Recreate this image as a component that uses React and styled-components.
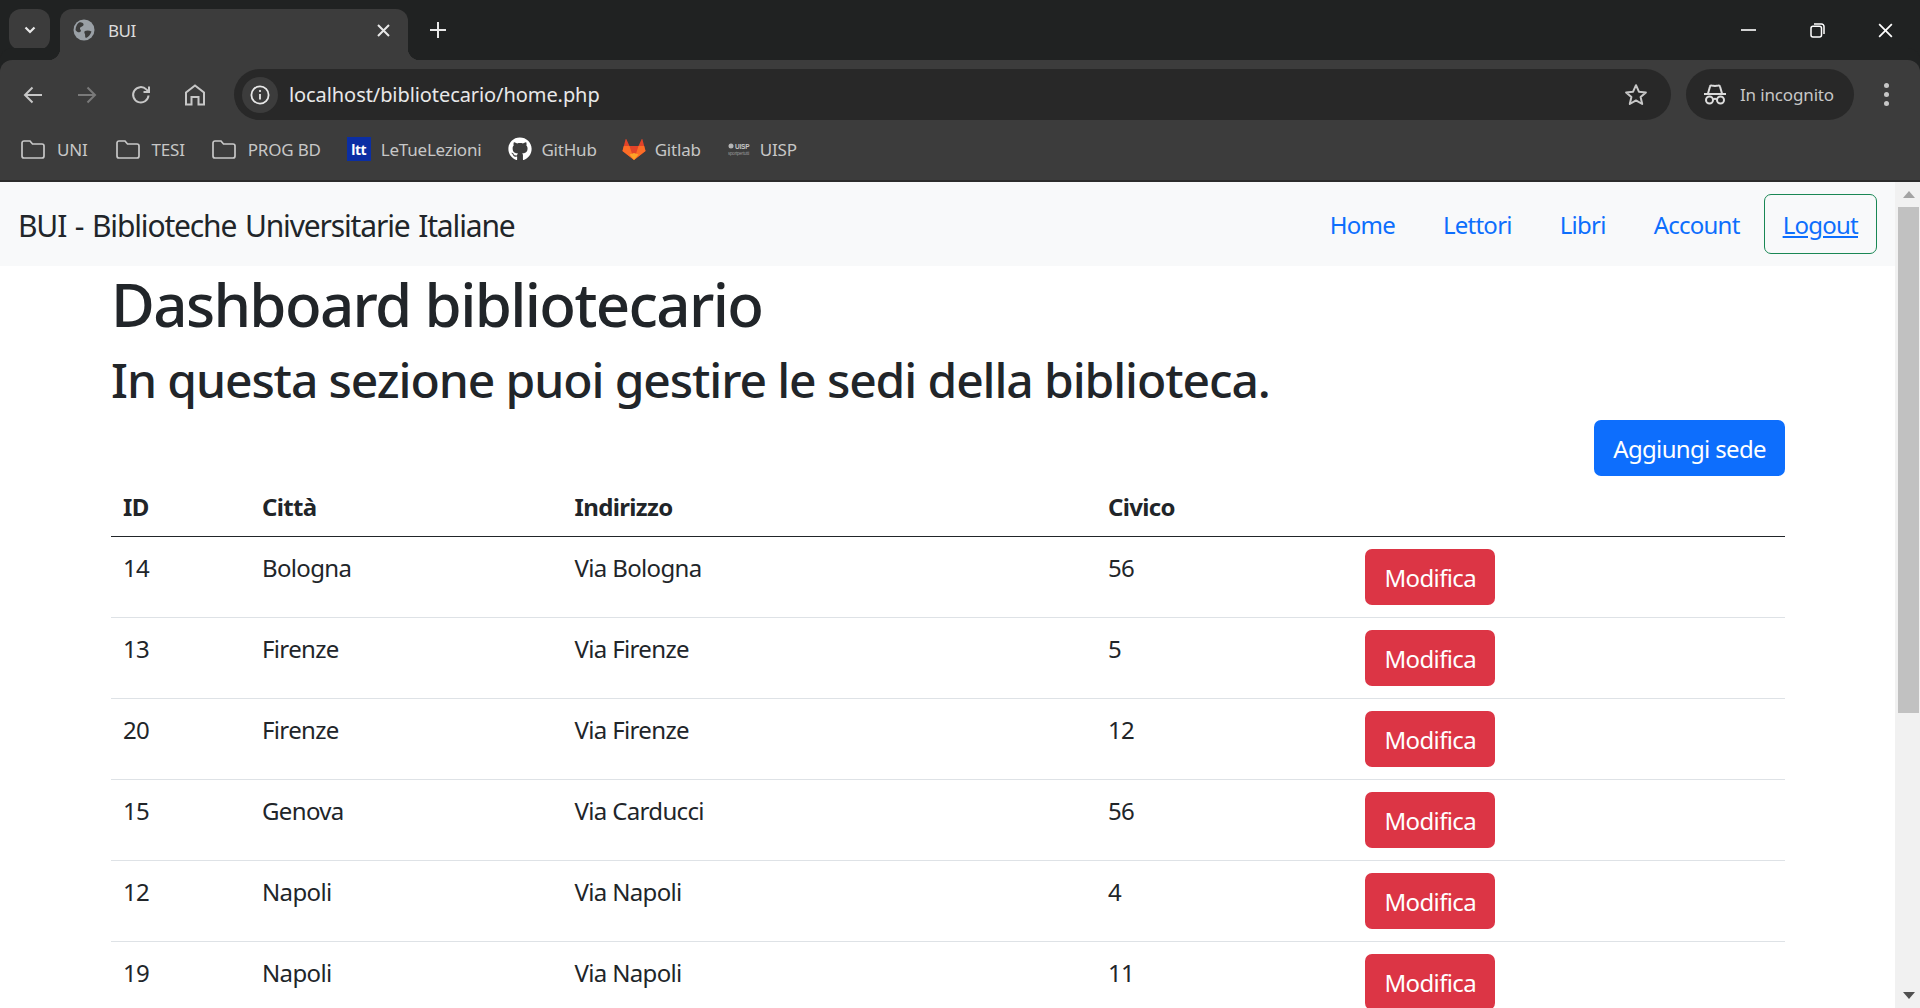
import React from 'react';
import styled, { createGlobalStyle } from 'styled-components';
import { FaGithub } from 'react-icons/fa';

const GlobalStyle = createGlobalStyle`
  html, body, #root { margin: 0; height: 100%; overflow: hidden; }
  body { font-family: "Noto Sans", "Open Sans", sans-serif; background: #fff; color: #212529; }
  * { box-sizing: border-box; }
`;

const Page = styled.div`
  height: 1008px;
  display: flex;
  flex-direction: column;
  overflow: hidden;
`;

const TabStrip = styled.div`
  height: 60px;
  flex: none;
  background: #202222;
  display: flex;
  align-items: flex-end;
  padding-left: 9px;
  color: #fff;
`;

const TabSearch = styled.div`
  width: 41px;
  height: 41px;
  margin-bottom: 10px;
  border-radius: 12px;
  background: #3c3c3c;
  display: flex;
  align-items: center;
  justify-content: center;
`;

const Tab = styled.div`
  position: relative;
  margin-left: 10px;
  width: 348px;
  height: 51px;
  background: #3c3c3c;
  border-radius: 12px 12px 0 0;
  display: flex;
  align-items: center;
  padding: 0 18px 9px 13px;
  &::before, &::after {
    content: '';
    position: absolute;
    bottom: 0;
    width: 12px;
    height: 12px;
  }
  &::before { left: -12px; background: radial-gradient(circle at 0 0, transparent 12px, #3c3c3c 12.5px); }
  &::after { right: -12px; background: radial-gradient(circle at 100% 0, transparent 12px, #3c3c3c 12.5px); }
`;

const TabTitle = styled.span`
  margin-left: 13px;
  flex: 1;
  font-size: 17px;
  letter-spacing: -0.5px;
  color: #dcdcdc;
`;

const NewTab = styled.div`
  margin: 0 0 22px 22px;
  display: flex;
`;

const WindowControls = styled.div`
  margin-left: auto;
  align-self: stretch;
  display: flex;
  align-items: center;
  gap: 53.5px;
  padding: 0 27px 0 0;
`;

const Toolbar = styled.div`
  height: 62px;
  flex: none;
  background: #3c3c3c;
  border-radius: 12px 12px 0 0;
  display: flex;
  align-items: center;
  padding: 7px 0 0 22px;
  box-shadow: 0 -12px 0 0 #202222;
`;

const NavIcons = styled.div`
  display: flex;
  align-items: center;
  gap: 32px;
  width: 212px;
`;

const Omnibox = styled.div`
  width: 1437px;
  height: 51px;
  border-radius: 26px;
  background: #282828;
  display: flex;
  align-items: center;
  padding: 0 23px 0 8px;
`;

const InfoChip = styled.div`
  width: 36px;
  height: 36px;
  border-radius: 50%;
  background: #3c3c3c;
  display: flex;
  align-items: center;
  justify-content: center;
`;

const Url = styled.span`
  margin-left: 11px;
  flex: 1;
  font-size: 20px;
  letter-spacing: -0.08px;
  color: #e8e8e8;
`;

const IncognitoPill = styled.div`
  margin-left: 15px;
  width: 168px;
  height: 51px;
  border-radius: 26px;
  background: #282828;
  display: flex;
  align-items: center;
  padding-left: 18px;
  gap: 14px;
  font-size: 17px;
  letter-spacing: -0.15px;
  color: #c7c7c7;
`;

const MoreDots = styled.div`
  margin-left: 30px;
  display: flex;
  flex-direction: column;
  gap: 4px;
  span { width: 5px; height: 5px; border-radius: 50%; background: #c7c7c7; display: block; }
`;

const Bookmarks = styled.div`
  height: 60px;
  flex: none;
  background: #3c3c3c;
  border-bottom: 2px solid #2c2c2c;
  display: flex;
  align-items: center;
  padding: 0 0 4px 21px;
`;

const Bookmark = styled.div`
  display: flex;
  align-items: center;
  gap: ${p => p.$gap || 12}px;
  margin-right: ${p => p.$after}px;
  font-size: 17px;
  letter-spacing: -0.2px;
  color: #c7c7c7;
`;

const LttBadge = styled.span`
  width: 24px;
  height: 24px;
  background: #0b2ea3;
  color: #fff;
  font-size: 14px;
  font-weight: 700;
  letter-spacing: -0.5px;
  display: flex;
  align-items: center;
  justify-content: center;
`;

const Body = styled.div`
  flex: 1;
  min-height: 0;
  display: flex;
`;

const Content = styled.div`
  flex: 1;
  min-width: 0;
`;

const Navbar = styled.nav`
  height: 84px;
  background: #f8f9fa;
  display: flex;
  align-items: center;
  justify-content: space-between;
  padding: 0 18px;
`;

const Brand = styled.span`
  padding-top: 2px;
  font-size: 30px;
  letter-spacing: -1.15px;
  word-spacing: 2px;
  color: #212529;
`;

const NavLinks = styled.div`
  display: flex;
  align-items: center;
`;

const NavLink = styled.a`
  font-size: 24px;
  letter-spacing: -0.75px;
  color: #0d6efd;
  padding: 0 24px;
`;

const LogoutLink = styled.a`
  height: 60px;
  padding: 0 18px;
  border: 1.5px solid #198754;
  border-radius: 7px;
  font-size: 24px;
  letter-spacing: -0.75px;
  color: #0d6efd;
  text-decoration: underline;
  display: flex;
  align-items: center;
`;

const Container = styled.main`
  padding: 0 110px 0 111px;
`;

const Title = styled.h1`
  margin: 0 0 10px;
  padding-top: 2px;
  font-size: 60px;
  line-height: 72px;
  font-weight: 500;
  letter-spacing: -1.65px;
`;

const Subtitle = styled.h2`
  margin: 0 0 11px;
  padding-top: 1px;
  font-size: 48px;
  line-height: 57.6px;
  font-weight: 500;
  letter-spacing: -1.1px;
`;

const Actions = styled.div`
  display: flex;
  justify-content: flex-end;
`;

const Button = styled.a`
  display: inline-flex;
  align-items: center;
  height: 56px;
  padding: 1px 19px 0;
  border-radius: 7px;
  font-size: 24px;
  letter-spacing: -0.65px;
  color: #fff;
  background: #0d6efd;
`;

const DangerButton = styled(Button)`
  padding: 3px 19.5px 0;
  margin-top: -1px;
  background: #dc3545;
`;

const Table = styled.table`
  width: 100%;
  table-layout: fixed;
  border-collapse: collapse;
  font-size: 24px;
  letter-spacing: -0.65px;
`;

const Th = styled.th`
  padding: 13px 12px 11px;
  height: 60px;
  text-align: left;
  font-weight: 700;
  line-height: 36px;
  border-bottom: 1px solid #212529;
`;

const Row = styled.tr`
  border-bottom: 1px solid #dee2e6;
`;

const Td = styled.td`
  padding: 13px 12px 11px;
  vertical-align: top;
  line-height: 36px;
  height: 81px;
`;

const Scrollbar = styled.div`
  width: 25px;
  flex: none;
  background: #f1f1f1;
  display: flex;
  flex-direction: column;
  align-items: center;
  padding-left: 2px;
`;

const ArrowBox = styled.div`
  height: 25px;
  flex: none;
  display: flex;
  align-items: center;
  justify-content: center;
`;

const Thumb = styled.div`
  width: 21px;
  height: 506px;
  background: #c1c1c1;
  flex: none;
`;

const Spacer = styled.div`
  flex: 1;
`;

const Chevron = () => (
  <svg width="14" height="14" viewBox="0 0 14 14" fill="none" stroke="#e8e8e8" strokeWidth="2.2"><path d="M2.5 4.5 7 9l4.5-4.5" /></svg>
);

const Globe = () => (
  <svg width="22" height="22" viewBox="0 0 22 22">
    <circle cx="11" cy="11" r="10.5" fill="#9aa0a6" />
    <path d="M6 3.5c2-.6 4 .2 4.500 1.600.4 1.300-.8 2.200-2 2.600-1.600.5-2 2-1 3 1.200 1.200-.2 2.600-1.400 2.600-1.400 0-2.600-1-3.600-2.400C2.800 7.700 4 4.600 6 3.500ZM12 12c1.800-.9 4.600-.6 6.500.6-.8 2.800-3 5.400-5.500 6.500-1.400-.9-.6-2.400-1-3.800-.3-1.100-1.400-2.300 0-3.300Z" fill="#3c3c3c" />
  </svg>
);

const Close = ({ size = 13, color = '#e8e8e8', width = 2 }) => (
  <svg width={size} height={size} viewBox="0 0 13 13" fill="none" stroke={color} strokeWidth={width}><path d="M1 1l11 11M12 1 1 12" /></svg>
);

const Plus = () => (
  <svg width="16" height="16" viewBox="0 0 16 16" fill="none" stroke="#e8e8e8" strokeWidth="2"><path d="M8 0v16M0 8h16" /></svg>
);

const Minimize = () => (
  <svg width="15" height="2" viewBox="0 0 15 2"><path d="M0 1h15" stroke="#fff" strokeWidth="1.6" /></svg>
);

const Restore = () => (
  <svg width="15" height="15" viewBox="0 0 15 15" fill="none" stroke="#fff" strokeWidth="1.5">
    <rect x="1" y="3.2" width="10.5" height="10.8" rx="2" />
    <path d="M4 1h7.500A2.500 2.500 0 0 1 14 3.500V11" />
  </svg>
);

const Back = ({ color = '#c7c7c7', flip }) => (
  <svg width="22" height="20" viewBox="0 0 22 20" fill="none" stroke={color} strokeWidth="2" style={flip ? { transform: 'scaleX(-1)' } : undefined}>
    <path d="M20 10H3M10.500 2.500 3 10l7.500 7.500" />
  </svg>
);

const Reload = () => (
  <svg width="22" height="22" viewBox="0 0 22 22" fill="none" stroke="#c7c7c7" strokeWidth="2">
    <path d="M18.500 11.500A7.700 7.700 0 1 1 16.300 5.400L19 8" />
    <path d="M19 2.500V8h-5.500" />
  </svg>
);

const Home = () => (
  <svg width="22" height="24" viewBox="0 0 22 24" fill="none" stroke="#c7c7c7" strokeWidth="2">
    <path d="M2 21.500V9.500L11 2.500l9 7v12h-5.500V14h-7v7.500Z" />
  </svg>
);

const InfoIcon = () => (
  <svg width="20" height="20" viewBox="0 0 20 20" fill="none" stroke="#e8e8e8" strokeWidth="1.8">
    <circle cx="10" cy="10" r="8.600" />
    <path d="M10 9v5.500" />
    <circle cx="10" cy="6" r="0.7" fill="#e8e8e8" strokeWidth="1" />
  </svg>
);

const Star = () => (
  <svg width="24" height="23" viewBox="0 0 24 23" fill="none" stroke="#c7c7c7" strokeWidth="2" strokeLinejoin="round">
    <path d="M12 2.200l2.900 6.500 7 .7-5.300 4.700 1.600 6.900-6.200-3.600-6.200 3.600 1.600-6.900L2.100 9.400l7-.7Z" />
  </svg>
);

const Incognito = () => (
  <svg width="22" height="21" viewBox="0 0 22 21" fill="none" stroke="#dcdcdc" strokeWidth="2">
    <path d="M0 10h22" />
    <path d="M4 9.500 6 2.500c.2-.8.8-1.200 1.600-1l3.400.6 3.400-.6c.8-.2 1.400.2 1.600 1l2 7" />
    <circle cx="5.500" cy="16" r="3.500" />
    <circle cx="16.500" cy="16" r="3.500" />
    <path d="M9 15.500c1.200-.8 2.800-.8 4 0" />
  </svg>
);

const Folder = () => (
  <svg width="24" height="19" viewBox="0 0 24 19" fill="none" stroke="#c7c7c7" strokeWidth="1.7">
    <path d="M1 3a2 2 0 0 1 2-2h6l2.500 3H21a2 2 0 0 1 2 2v10a2 2 0 0 1-2 2H3a2 2 0 0 1-2-2Z" />
  </svg>
);

const Gitlab = () => (
  <svg width="24" height="24" viewBox="0 0 24 24">
    <path d="M12 23 .5 14 3.600 2.200c.1-.4.6-.4.8 0L7.500 9h9l3.100-6.800c.2-.4.7-.4.8 0L23.500 14Z" fill="#e24329" />
    <path d="M12 23 .5 14 1.800 9 7.500 9Z" fill="#fc6d26" />
    <path d="M12 23 23.500 14 22.200 9 16.500 9Z" fill="#fc6d26" />
    <path d="M12 23 7.500 17.500 12 16 16.500 17.500Z" fill="#fca326" />
  </svg>
);

const Uisp = () => (
  <svg width="24" height="14" viewBox="0 0 24 14">
    <circle cx="3" cy="4" r="2.500" fill="#b5b5b5" />
    <text x="7" y="6.500" fontSize="6.500" fontWeight="700" fill="#c7c7c7" fontFamily="Liberation Sans, sans-serif">UISP</text>
    <text x="0" y="12.500" fontSize="4.500" fill="#9a9a9a" fontFamily="Liberation Sans, sans-serif">sportpertutti</text>
  </svg>
);

const ArrowUp = () => (
  <svg width="12" height="7" viewBox="0 0 12 7"><path d="M6 0l6 7H0Z" fill="#a3a3a3" /></svg>
);

const ArrowDown = () => (
  <svg width="12" height="7" viewBox="0 0 12 7"><path d="M0 0h12L6 7Z" fill="#505050" /></svg>
);

const sedi = [
  { id: 14, citta: 'Bologna', indirizzo: 'Via Bologna', civico: 56 },
  { id: 13, citta: 'Firenze', indirizzo: 'Via Firenze', civico: 5 },
  { id: 20, citta: 'Firenze', indirizzo: 'Via Firenze', civico: 12 },
  { id: 15, citta: 'Genova', indirizzo: 'Via Carducci', civico: 56 },
  { id: 12, citta: 'Napoli', indirizzo: 'Via Napoli', civico: 4 },
  { id: 19, citta: 'Napoli', indirizzo: 'Via Napoli', civico: 11 },
];

const App = () => {
  return (
    <Page>
      <GlobalStyle />
      <TabStrip>
        <TabSearch><Chevron /></TabSearch>
        <Tab>
          <Globe />
          <TabTitle>BUI</TabTitle>
          <Close />
        </Tab>
        <NewTab><Plus /></NewTab>
        <WindowControls>
          <Minimize />
          <Restore />
          <Close size={15} color="#fff" width={1.5} />
        </WindowControls>
      </TabStrip>
      <Toolbar>
        <NavIcons>
          <Back />
          <Back color="#7a7a7a" flip />
          <Reload />
          <Home />
        </NavIcons>
        <Omnibox>
          <InfoChip><InfoIcon /></InfoChip>
          <Url>localhost/bibliotecario/home.php</Url>
          <Star />
        </Omnibox>
        <IncognitoPill>
          <Incognito />
          In incognito
        </IncognitoPill>
        <MoreDots><span /><span /><span /></MoreDots>
      </Toolbar>
      <Bookmarks>
        <Bookmark $after={28}><Folder />UNI</Bookmark>
        <Bookmark $after={27}><Folder />TESI</Bookmark>
        <Bookmark $after={26}><Folder />PROG BD</Bookmark>
        <Bookmark $after={27} $gap={10}><LttBadge>ltt</LttBadge>LeTueLezioni</Bookmark>
        <Bookmark $after={25} $gap={9}><FaGithub size={24} color="#fff" />GitHub</Bookmark>
        <Bookmark $after={27} $gap={9}><Gitlab />Gitlab</Bookmark>
        <Bookmark $after={0} $gap={8}><Uisp />UISP</Bookmark>
      </Bookmarks>
      <Body>
        <Content>
          <Navbar>
            <Brand>BUI - Biblioteche Universitarie Italiane</Brand>
            <NavLinks>
              <NavLink>Home</NavLink>
              <NavLink>Lettori</NavLink>
              <NavLink>Libri</NavLink>
              <NavLink>Account</NavLink>
              <LogoutLink>Logout</LogoutLink>
            </NavLinks>
          </Navbar>
          <Container>
            <Title>Dashboard bibliotecario</Title>
            <Subtitle>In questa sezione puoi gestire le sedi della biblioteca.</Subtitle>
            <Actions><Button>Aggiungi sede</Button></Actions>
            <Table>
              <colgroup>
                <col width="139" />
                <col width="312.500" />
                <col width="533.500" />
                <col width="257" />
                <col />
              </colgroup>
              <thead>
                <tr>
                  <Th>ID</Th>
                  <Th>Città</Th>
                  <Th>Indirizzo</Th>
                  <Th>Civico</Th>
                  <Th />
                </tr>
              </thead>
              <tbody>
                {sedi.map(s => (
                  <Row key={s.id}>
                    <Td>{s.id}</Td>
                    <Td>{s.citta}</Td>
                    <Td>{s.indirizzo}</Td>
                    <Td>{s.civico}</Td>
                    <Td><DangerButton>Modifica</DangerButton></Td>
                  </Row>
                ))}
              </tbody>
            </Table>
          </Container>
        </Content>
        <Scrollbar>
          <ArrowBox><ArrowUp /></ArrowBox>
          <Thumb />
          <Spacer />
          <ArrowBox><ArrowDown /></ArrowBox>
        </Scrollbar>
      </Body>
    </Page>
  );
};

export default App;
